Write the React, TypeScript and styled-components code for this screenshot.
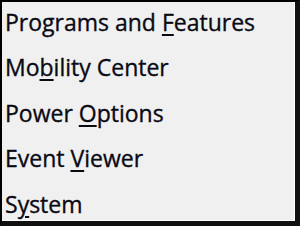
import styled, { createGlobalStyle } from "styled-components"

const GlobalStyle = createGlobalStyle`
    html, body {
        margin: 0;
        padding: 0;
        background: #000;
    }
`

const items = [
    { before: "Programs and ", key: "F", after: "eatures" },
    { before: "Mo", key: "b", after: "ility Center" },
    { before: "Power ", key: "O", after: "ptions" },
    { before: "Event ", key: "V", after: "iewer" },
    { before: "S", key: "y", after: "stem" },
]

function App() {
    return (
        <>
            <GlobalStyle />
            <Frame>
                <Panel>
                    {items.map((item) => (
                        <Item key={item.before + item.key}>
                            <Label>
                                {item.before}
                                <Key>{item.key}</Key>
                                {item.after}
                            </Label>
                        </Item>
                    ))}
                </Panel>
            </Frame>
        </>
    )
}

export default App

const Frame = styled.div`
    width: 300px;
    height: 226px;
    box-sizing: border-box;
    background: #000;
    border-top: 2px solid #000;
    border-left: 2px solid #000;
    border-right: 5px solid #111;
    border-bottom: 5px solid #111;
    overflow: hidden;
`

const Panel = styled.div`
    height: 100%;
    box-sizing: border-box;
    background: #f0f0f0;
    border-right: 1px solid #fff;
    border-bottom: 1px solid #fff;
    display: flex;
    flex-direction: column;
    overflow: hidden;
`

const Item = styled.div`
    flex: 0 0 45.5px;
    display: flex;
    align-items: center;
    padding-left: 3px;
    &:first-child {
        margin-top: -3px;
    }
`

const Label = styled.span`
    font-family: "Open Sans", "Noto Sans", sans-serif;
    font-size: 23px;
    color: #0a0a14;
    white-space: pre;
    -webkit-text-stroke: 0.35px #0a0a14;
`

const Key = styled.span`
    text-decoration: underline;
    text-underline-offset: 3px;
    text-decoration-thickness: 2px;
`
